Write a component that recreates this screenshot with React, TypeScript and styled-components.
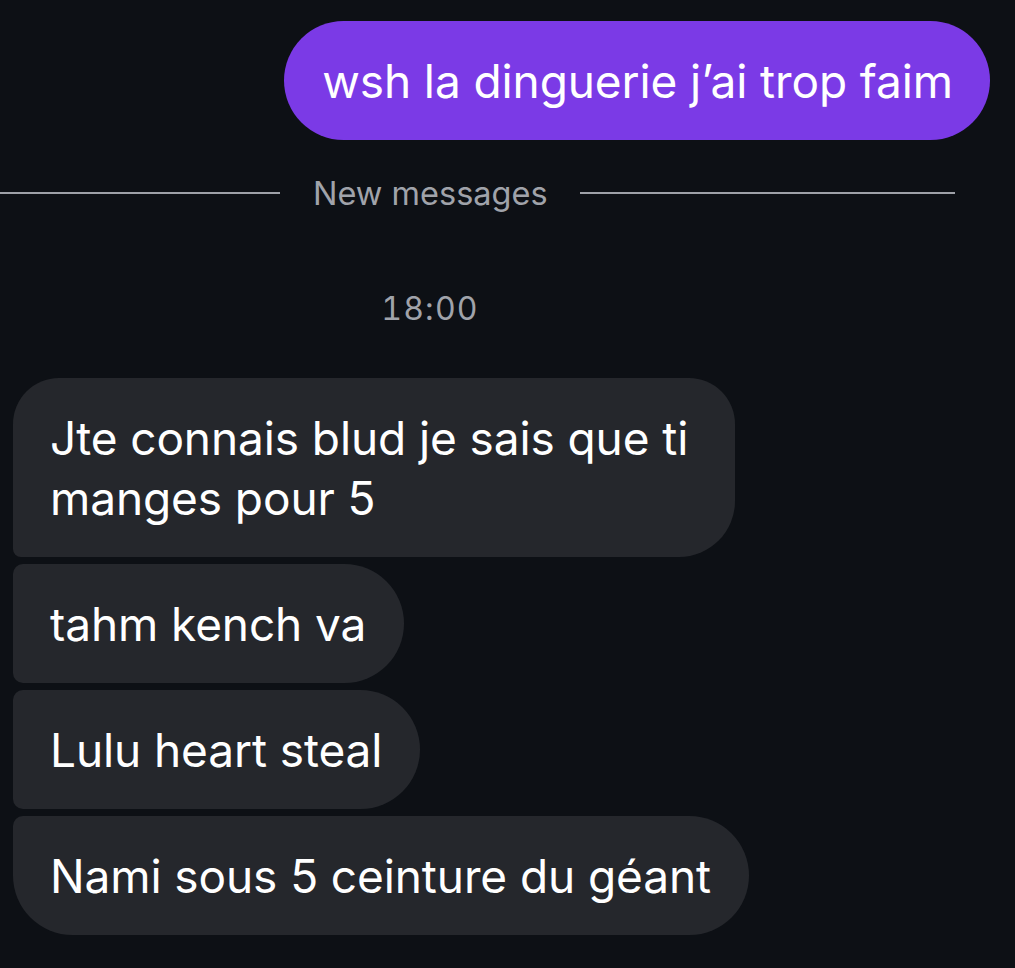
import React from "react";
import styled, { createGlobalStyle } from "styled-components";

const Global = createGlobalStyle`
  html, body {
    margin: 0;
    padding: 0;
    background: #0d1015;
  }
  body {
    font-family: Inter, "Noto Sans", "Liberation Sans", sans-serif;
    -webkit-font-smoothing: antialiased;
  }
`;

const Page = styled.div`
  width: 1015px;
  height: 968px;
  background: #0d1015;
  padding-top: 21px;
  box-sizing: border-box;
  overflow: hidden;
`;

const SentRow = styled.div`
  display: flex;
  justify-content: flex-end;
  padding-right: 25px;
`;

const SentBubble = styled.div`
  background: #7b3ae6;
  color: #ffffff;
  font-size: 46px;
  line-height: 60px;
  letter-spacing: -0.1px;
  padding: 30px 37px 29px 38px;
  border-radius: 60px;
  white-space: nowrap;
`;

const Divider = styled.div`
  display: flex;
  align-items: center;
  margin-top: 33px;
  height: 40px;
`;

const Line = styled.div<{ $w: number }>`
  width: ${(p) => p.$w}px;
  height: 2px;
  background: #9ea1a8;
`;

const DividerLabel = styled.span`
  margin: 0 32px 0 33px;
  font-size: 32.5px;
  color: #a0a3aa;
  white-space: nowrap;
`;

const Time = styled.div`
  width: 860px;
  text-align: center;
  margin-top: 76px;
  font-size: 32px;
  line-height: 40px;
  letter-spacing: 1.2px;
  font-variant-numeric: tabular-nums;
  color: #a0a3aa;
`;

const Group = styled.div`
  display: flex;
  flex-direction: column;
  align-items: flex-start;
  gap: 7px;
  margin-top: 49px;
  padding-left: 13px;
`;

type Pos = "first" | "middle" | "last";

const Bubble = styled.div<{ $pos: Pos }>`
  background: #25272c;
  color: #ffffff;
  font-size: 46px;
  line-height: 60px;
  letter-spacing: -0.1px;
  padding: 30px 38px 29px 37px;
  max-width: ${(p) => (p.$pos === "first" ? 722 : 760)}px;
  box-sizing: border-box;
  border-radius: ${(p) =>
    p.$pos === "first"
      ? "46px 46px 56px 8px"
      : p.$pos === "middle"
      ? "10px 60px 60px 10px"
      : "10px 60px 60px 60px"};
`;

export default function App() {
  return (
    <>
      <Global />
      <Page>
        <SentRow>
          <SentBubble>wsh la dinguerie j’ai trop faim</SentBubble>
        </SentRow>
        <Divider>
          <Line $w={280} />
          <DividerLabel>New messages</DividerLabel>
          <Line $w={375} />
        </Divider>
        <Time>18:00</Time>
        <Group>
          <Bubble $pos="first">Jte connais blud je sais que ti manges pour 5</Bubble>
          <Bubble $pos="middle">tahm kench va</Bubble>
          <Bubble $pos="middle">Lulu heart steal</Bubble>
          <Bubble $pos="last">Nami sous 5 ceinture du géant</Bubble>
        </Group>
      </Page>
    </>
  );
}
